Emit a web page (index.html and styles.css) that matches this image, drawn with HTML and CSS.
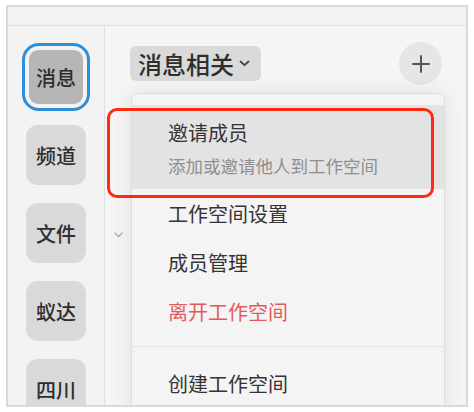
FILE: index.html
```html
<!DOCTYPE html>
<html lang="zh-CN">
<head>
    <meta charset="UTF-8">
    <meta name="viewport" content="width=device-width, initial-scale=1.0">
    <title>消息相关</title>
    <link rel="stylesheet" href="styles.css">
</head>
<body>
    <div class="window">
        <div class="titlebar"></div>
        <div class="layout">
            <nav class="sidebar">
                <div class="space active"><span class="tile">消息</span></div>
                <div class="space"><span class="tile">频道</span></div>
                <div class="space"><span class="tile">文件</span></div>
                <div class="space"><span class="tile">蚁达</span></div>
                <div class="space"><span class="tile">四川</span></div>
            </nav>

            <main class="main">
                <div class="header">
                    <button class="ws-switch">消息相关
                        <svg width="11" height="7" viewBox="0 0 11 7"><path d="M1.5 1.5 L5.5 5.2 L9.5 1.5" fill="none" stroke="#444" stroke-width="1.8" stroke-linecap="round" stroke-linejoin="round"/></svg>
                    </button>
                    <button class="add-btn">
                        <svg width="18" height="18" viewBox="0 0 18 18"><path d="M9 1 V17 M1 9 H17" stroke="#555" stroke-width="2" stroke-linecap="round"/></svg>
                    </button>
                </div>

                <div class="group-toggle">
                    <svg width="9" height="6" viewBox="0 0 9 6"><path d="M1 1 L4.5 4.5 L8 1" fill="none" stroke="#aaa" stroke-width="1.3" stroke-linecap="round"/></svg>
                </div>

                <!-- dropdown of the workspace switch -->
                <div class="menu">
                    <div class="menu-section">
                        <div class="menu-item hover">
                            <div class="item-title">邀请成员</div>
                            <div class="item-desc">添加或邀请他人到工作空间</div>
                        </div>
                        <div class="menu-item">工作空间设置</div>
                        <div class="menu-item">成员管理</div>
                        <div class="menu-item danger">离开工作空间</div>
                    </div>
                    <div class="menu-section">
                        <div class="menu-item">创建工作空间</div>
                    </div>
                </div>
            </main>
        </div>

        <div class="highlight-mark"></div>
    </div>
</body>
</html>
```

FILE: styles.css
```css
body {
    margin: 0;
    background: #ffffff;
    font-family: "Noto Sans CJK SC", "Noto Sans", sans-serif;
    color: #333;
}
.window {
    position: relative;
    margin: 5px 0 0 6px;
    width: 462px;
    height: 402px;
    box-sizing: border-box;
    border: 2px solid #d9d9d9;
    display: flex;
    flex-direction: column;
    overflow: hidden;
    background: #f4f4f4;
}
.titlebar {
    height: 18px;
    flex: none;
    background: #f2f2f2;
    border-bottom: 1px solid #e1e1e1;
}
.layout {
    flex: 1;
    display: flex;
    min-height: 0;
}

/* left rail */
.sidebar {
    width: 97px;
    flex: none;
    background: #f3f3f3;
    border-right: 1px solid #e0e0e0;
    display: flex;
    flex-direction: column;
    align-items: center;
    gap: 10px;
    padding-top: 17px;
    box-sizing: border-box;
}
.space {
    width: 68px;
    height: 68px;
    flex: none;
    display: flex;
    align-items: center;
    justify-content: center;
    box-sizing: border-box;
}
.tile {
    width: 60px;
    height: 60px;
    border-radius: 12px;
    background: #d9d9d9;
    display: flex;
    align-items: center;
    justify-content: center;
    font-size: 20px;
    font-weight: 500;
    color: #2e2e2e;
}
.space.active {
    border: 3.5px solid #2b8fd9;
    border-radius: 17px;
    padding: 4px;
}
.space.active .tile {
    width: 100%;
    height: 100%;
    border-radius: 9px;
    background: #b6b6b6;
}

/* main column */
.main {
    flex: 1;
    position: relative;
    background: #f5f5f5;
}
.header {
    display: flex;
    align-items: center;
    justify-content: space-between;
    padding: 16px 24px 0 25px;
    height: 43px;
}
.ws-switch {
    height: 35px;
    padding: 0 11px 0 8px;
    border: none;
    border-radius: 6px;
    background: #dadada;
    font-family: inherit;
    font-size: 24px;
    font-weight: 500;
    color: #2e2e2e;
    display: flex;
    align-items: center;
    gap: 5px;
}
.add-btn {
    width: 43px;
    height: 43px;
    border: none;
    border-radius: 50%;
    background: #e6e6e6;
    display: flex;
    align-items: center;
    justify-content: center;
    padding: 0;
}
.group-toggle {
    margin: 146px 0 0 9px;
    width: 9px;
    line-height: 0;
}

.menu {
    position: absolute;
    top: 67px;
    left: 26px;
    width: 314px;
    height: 340px;
    box-sizing: border-box;
    background: #f4f4f4;
    border: 1px solid #dedede;
    border-radius: 6px;
    box-shadow: 0 0 22px rgba(0, 0, 0, 0.09);
    padding-top: 11px;
}
.menu-section {
    padding-bottom: 10px;
}
.menu-section + .menu-section {
    border-top: 1px solid #e3e3e3;
    padding-top: 12px;
}
.menu-item {
    padding-left: 36px;
    font-size: 20px;
    line-height: 49px;
    color: #353535;
}
.menu-item.hover {
    background: #e3e3e3;
    padding-top: 14px;
    padding-bottom: 10px;
    line-height: normal;
}
.item-title {
    line-height: 28px;
}
.item-desc {
    margin-top: 6px;
    font-size: 17.5px;
    line-height: 26px;
    color: #8e8e8e;
}
.menu-item.danger {
    color: #e35a5a;
}

/* red annotation frame */
.highlight-mark {
    position: absolute;
    left: 99px;
    top: 101px;
    width: 327px;
    height: 90px;
    box-sizing: border-box;
    border: 3px solid #ff2a10;
    border-radius: 10px;
}
```
